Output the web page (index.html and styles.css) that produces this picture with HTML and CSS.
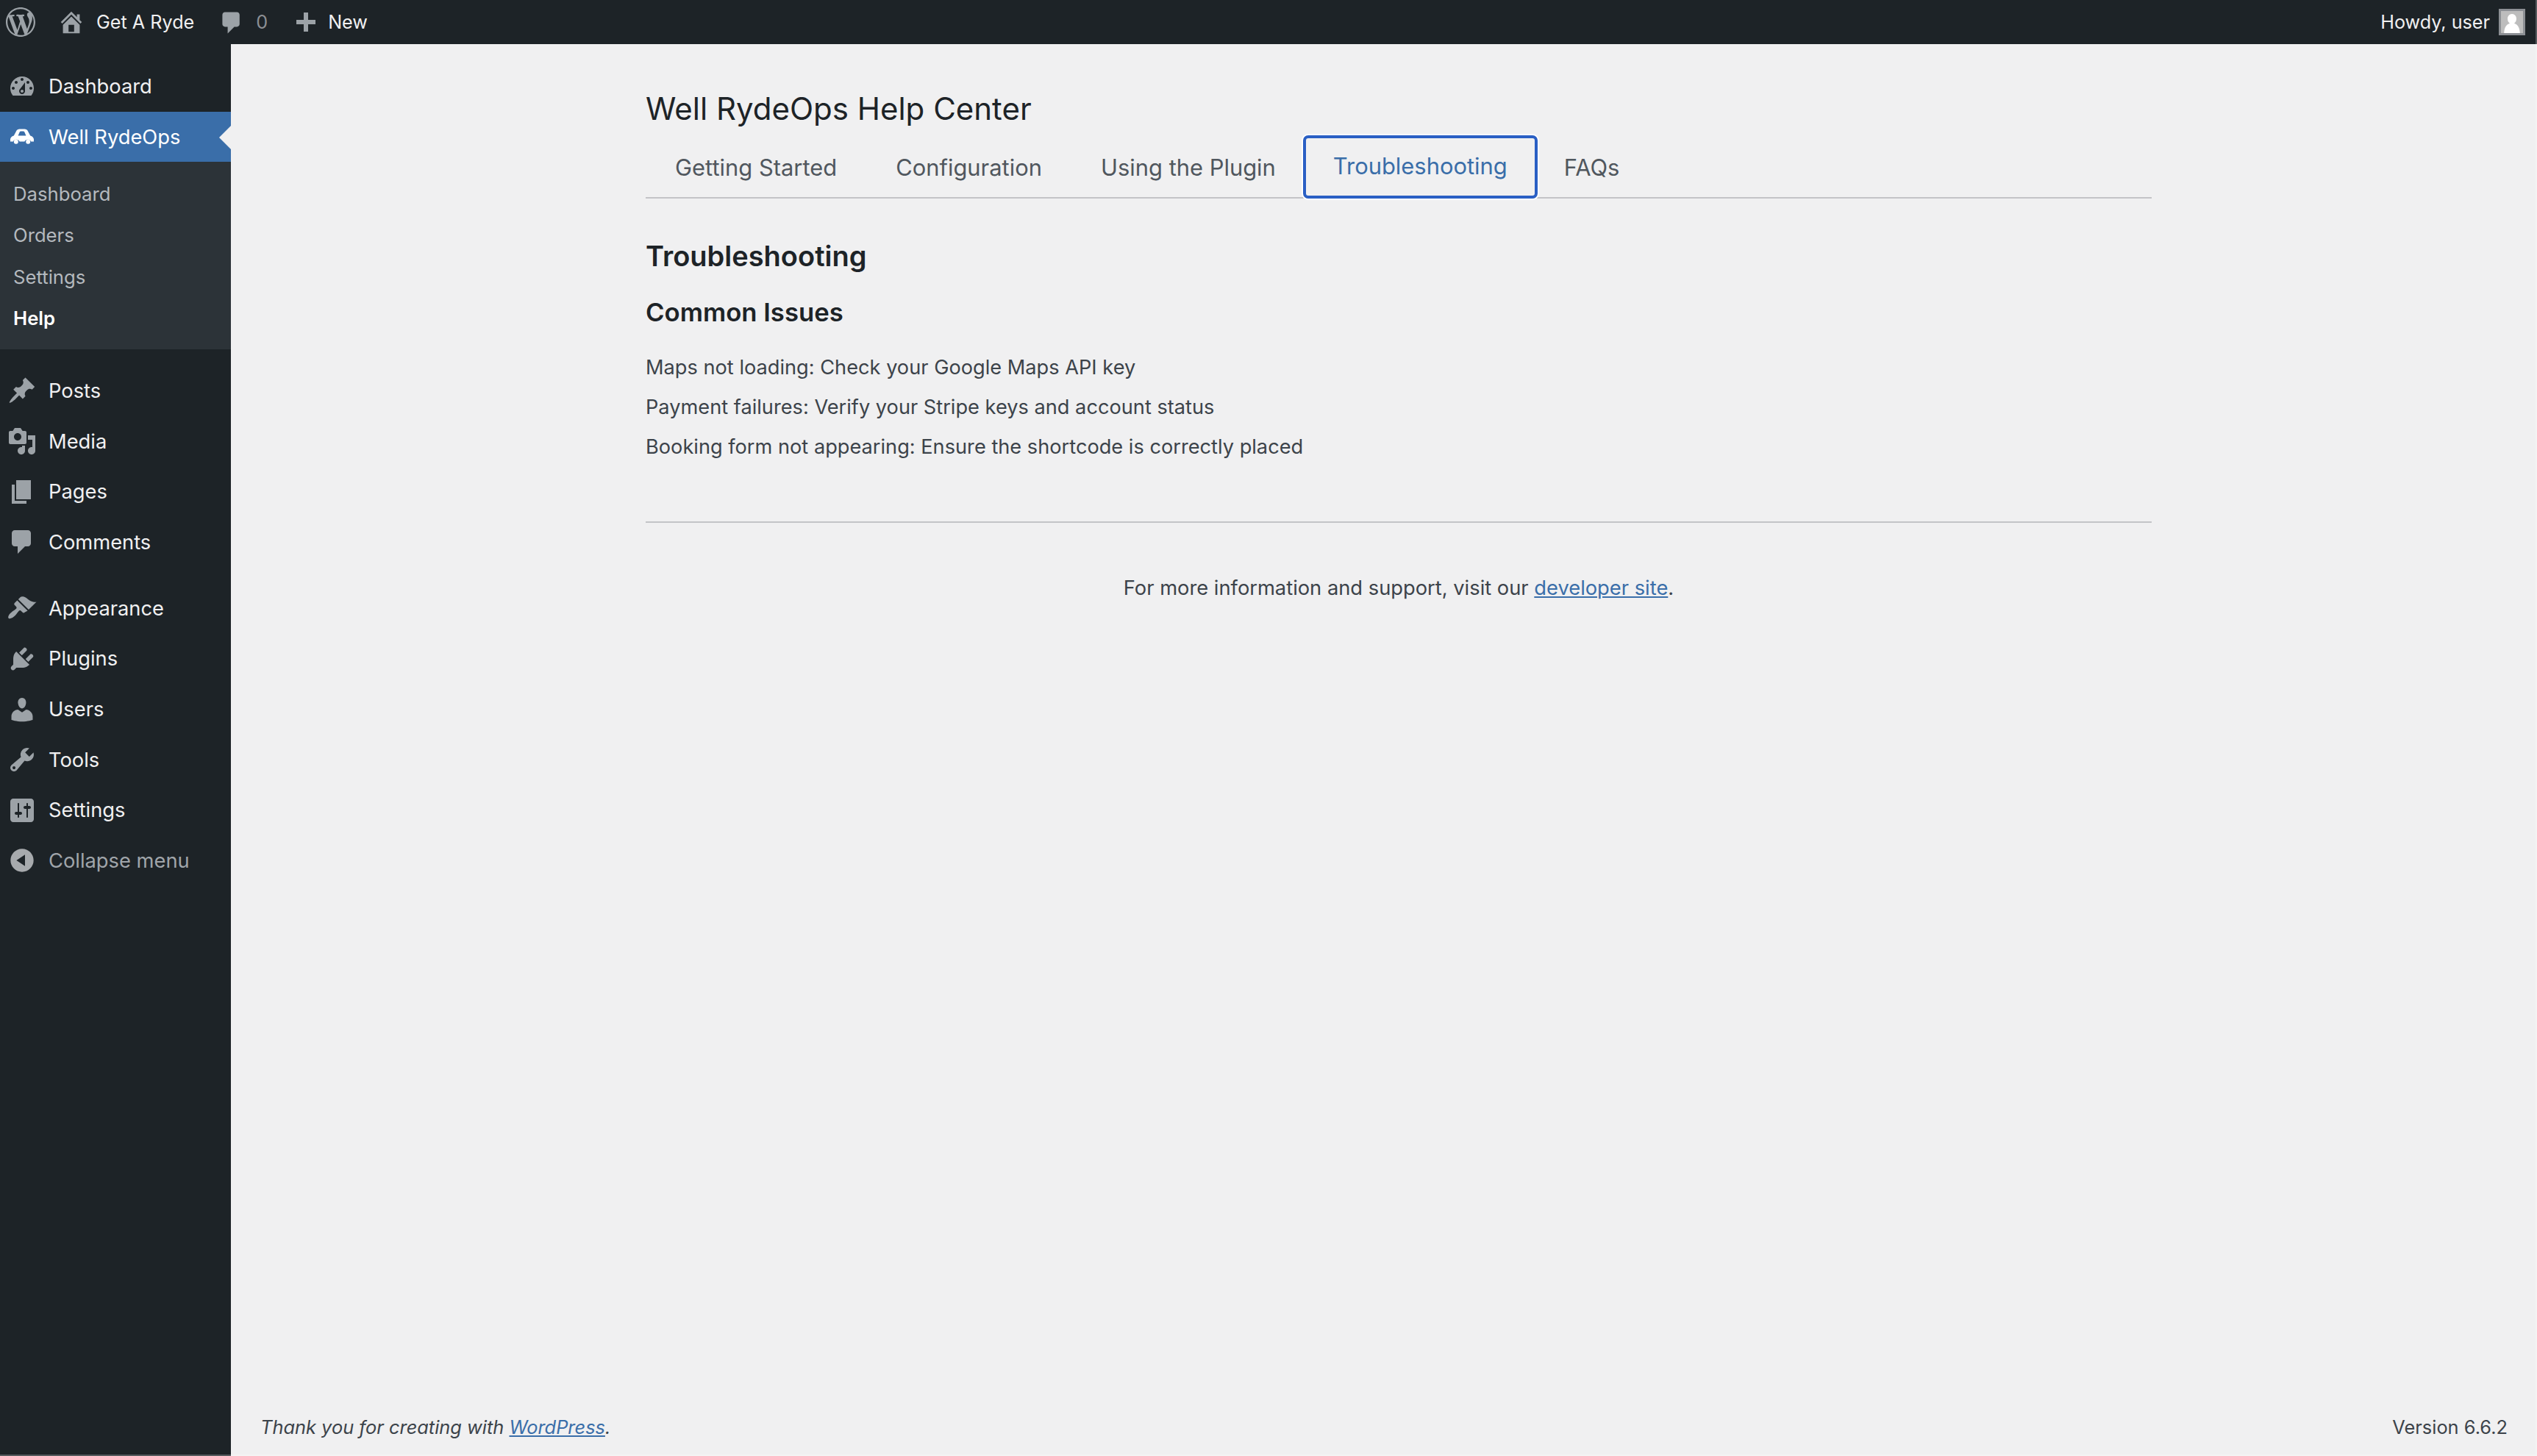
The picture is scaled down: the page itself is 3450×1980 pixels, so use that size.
FILE: index.html
```html
<!DOCTYPE html>
<html lang="en">
<head>
<meta charset="utf-8">
<title>Well RydeOps Help Center</title>
<link rel="stylesheet" href="styles.css">
</head>
<body>
<header class="adminbar">
  <svg class="bar-logo" viewBox="0 0 20 20"><path d="M20 10c0-5.51-4.49-10-10-10C4.48 0 0 4.49 0 10c0 5.52 4.48 10 10 10 5.51 0 10-4.48 10-10zM7.780 15.370L4.370 6.220c.55-.02 1.170-.08 1.170-.08.5-.06.44-1.130-.06-1.110 0 0-1.450.11-2.370.11-.18 0-.37 0-.58-.01C4.120 2.690 6.870 1.110 10 1.110c2.330 0 4.450.87 6.050 2.340-.68-.11-1.650.39-1.650 1.580 0 .74.45 1.360.9 2.100.35.61.55 1.360.55 2.460 0 1.490-1.400 5-1.400 5l-3.030-8.370c.54-.02.82-.17.82-.17.5-.05.44-1.250-.06-1.220 0 0-1.440.12-2.380.12-.87 0-2.330-.12-2.330-.12-.5-.03-.56 1.200-.06 1.220l.92.08 1.260 3.410zM17.410 10c.24-.64.74-1.870.43-4.250.7 1.290 1.050 2.710 1.050 4.250 0 3.290-1.730 6.240-4.400 7.780.97-2.590 1.940-5.200 2.920-7.780zM6.100 18.090C3.120 16.650 1.110 13.530 1.110 10c0-1.300.23-2.480.72-3.590C3.250 10.300 4.670 14.200 6.100 18.090zm4.030-6.630l2.580 6.980c-.86.29-1.760.45-2.710.45-.79 0-1.570-.11-2.290-.33.81-2.380 1.620-4.740 2.420-7.100z"/></svg>
  <svg class="bar-home" viewBox="0 0 20 20"><path fill-rule="evenodd" d="M16 8.500l1.530 1.530-1.060 1.060L10 4.620l-6.470 6.470-1.060-1.060L10 2.500l4 4v-2h2v4zm-6-2.460l6 5.990V18H4v-5.970zM12 17v-5H8v5h4z"/></svg>
  <span class="bar-site">Get A Ryde</span>
  <svg class="bar-comment" viewBox="0 0 20 20"><path d="M5 2h9c1.100 0 2 .9 2 2v7c0 1.100-.9 2-2 2h-2l-5 5v-5H5c-1.100 0-2-.9-2-2V4c0-1.100.9-2 2-2z"/></svg>
  <span class="bar-count">0</span>
  <svg class="bar-plus" viewBox="0 0 26 26"><path d="M10 0h6v10h10v6H16v10h-6V16H0v-6h10z"/></svg>
  <span class="bar-new">New</span>
  <span class="bar-howdy">Howdy, user</span>
  <svg class="bar-avatar" viewBox="0 0 36 36"><rect x="1.500" y="1.500" width="33" height="33" fill="#bdbdbd" stroke="#8c8f94" stroke-width="3"/><path fill="#fff" d="M18 7c3.800 0 6 3 6 6.500 0 2.700-1.200 5-3 6.200 4.500 1.300 7.500 5.700 7.800 13.300H7.200c.3-7.600 3.300-12 7.800-13.300-1.800-1.200-3-3.500-3-6.200C12 10 14.200 7 18 7z"/></svg>
</header>

<div class="layout">
  <nav class="sidebar">
    <ul class="menu">
      <li class="item"><svg class="ico" viewBox="0 0 20 20"><path fill-rule="evenodd" d="M3.760 16h12.480c1.100-1.370 1.760-3.110 1.760-5 0-4.420-3.580-8-8-8s-8 3.580-8 8c0 1.890.66 3.630 1.760 5zM10 4c.55 0 1 .45 1 1s-.45 1-1 1-1-.45-1-1 .45-1 1-1zM6 6c.55 0 1 .45 1 1s-.45 1-1 1-1-.45-1-1 .45-1 1-1zm8 0c.55 0 1 .45 1 1s-.45 1-1 1-1-.45-1-1 .45-1 1-1zm-5.370 5.550L12 7v6c0 1.100-.9 2-2 2s-2-.9-2-2c0-.57.24-1.080.63-1.450zM4 10c.55 0 1 .45 1 1s-.45 1-1 1-1-.45-1-1 .45-1 1-1zm12 0c.55 0 1 .45 1 1s-.45 1-1 1-1-.45-1-1 .45-1 1-1zm-5 3c0-.55-.45-1-1-1s-1 .45-1 1 .45 1 1 1 1-.45 1-1z"/></svg>Dashboard</li>
      <li class="item item-current"><svg class="ico" viewBox="0 0 20 20"><path fill-rule="evenodd" d="M2 13.300v-1.600c0-1.100 1-2.100 2.400-2.500L6 6.200c.5-1 1.300-1.450 2.300-1.450h3.400c1 0 1.800.45 2.300 1.450l1.600 3c1.400.4 2.400 1.400 2.400 2.500v1.600h-1.900a2.400 2.400 0 0 0-4.400 0H8.300a2.400 2.400 0 0 0-4.400 0H2zM7.300 9.200h5.400l-1-2.300c-.2-.4-.5-.6-.9-.6H9.200c-.4 0-.7.2-.9.6l-1 2.300z"/><circle cx="5.900" cy="13.400" r="1.500"/><circle cx="14.100" cy="13.400" r="1.500"/></svg>Well RydeOps</li>
    </ul>
    <ul class="submenu">
      <li class="subitem">Dashboard</li>
      <li class="subitem">Orders</li>
      <li class="subitem">Settings</li>
      <li class="subitem subitem-current">Help</li>
    </ul>
    <ul class="menu menu-group">
      <li class="item"><svg class="ico" viewBox="0 0 20 20"><path d="M10.440 3.020l1.820-1.820 6.360 6.350-1.830 1.820c-1.050-.68-2.480-.57-3.410.36l-.75.75c-.92.93-1.040 2.350-.35 3.410l-1.830 1.820-2.410-2.410-2.800 2.790c-.42.42-3.380 2.710-3.800 2.290s1.860-3.390 2.280-3.810l2.790-2.790L4.100 9.360l1.830-1.820c1.050.69 2.480.57 3.400-.36l.75-.75c.93-.92 1.050-2.350.36-3.410z"/></svg>Posts</li>
      <li class="item"><svg class="ico" viewBox="0 0 20 20"><path fill-rule="evenodd" d="M13 11V4c0-.55-.45-1-1-1h-1.670L9 1H5L3.670 3H2c-.55 0-1 .45-1 1v7c0 .55.45 1 1 1h10c.55 0 1-.45 1-1zM7 4.500c1.380 0 2.500 1.120 2.500 2.500S8.380 9.500 7 9.500 4.500 8.380 4.500 7 5.620 4.500 7 4.500zM14 6h5v10.500c0 1.380-1.120 2.500-2.500 2.500S14 17.880 14 16.500s1.120-2.500 2.500-2.500c.17 0 .34.02.5.05V9h-3V6zm-4 8.050V13h2v3.500c0 1.380-1.120 2.500-2.500 2.500S7 17.880 7 16.500 8.120 14 9.500 14c.17 0 .34.02.5.05z"/></svg>Media</li>
      <li class="item"><svg class="ico" viewBox="0 0 20 20"><path d="M6 15V2h10v13H6zm-1 1h8v2H3V5h2v11z"/></svg>Pages</li>
      <li class="item"><svg class="ico" viewBox="0 0 20 20"><path d="M5 2h9c1.100 0 2 .9 2 2v7c0 1.100-.9 2-2 2h-2l-5 5v-5H5c-1.100 0-2-.9-2-2V4c0-1.100.9-2 2-2z"/></svg>Comments</li>
    </ul>
    <ul class="menu menu-group">
      <li class="item"><svg class="ico" viewBox="0 0 20 20"><path d="M14.480 11.060L7.410 3.990l1.500-1.500c.5-.56 2.300-.47 3.510.32 1.210.8 1.430 1.280 2.910 2.100 1.180.64 2.450 1.260 4.450.85zm-.71.71L6.700 4.700 4.930 6.470c-.39.39-.39 1.020 0 1.410l1.060 1.060c.39.39.39 1.030 0 1.420-.6.6-1.430 1.110-2.210 1.690-.35.26-.7.53-1.010.84C1.430 13.710 0 16.060.86 16.920c.85.86 3.200-.57 4.480-1.860.31-.31.58-.66.84-1.010.58-.78 1.090-1.610 1.690-2.210.39-.39 1.030-.39 1.420 0l1.060 1.060c.39.39 1.020.39 1.410 0z"/></svg>Appearance</li>
      <li class="item"><svg class="ico" viewBox="0 0 20 20"><path d="M13.110 4.360L9.870 7.600 8 5.730l3.240-3.240c.35-.34 1.050-.2 1.560.32.52.51.66 1.210.31 1.550zm-8 1.770l.91-1.120 9.010 9.010-1.190.84c-.71.71-2.630 1.160-3.820 1.160H6.140L4.900 17.260c-.59.59-1.540.59-2.120 0-.59-.58-.59-1.530 0-2.120l1.240-1.240v-3.880c0-1.130.4-3.190 1.090-3.890zm7.260 3.970l3.240-3.240c.34-.35 1.040-.21 1.550.31.52.51.66 1.210.31 1.550l-3.240 3.250z"/></svg>Plugins</li>
      <li class="item"><svg class="ico" viewBox="0 0 20 20"><path d="M10 9.250c-2.270 0-2.730-3.440-2.730-3.440C7 4.020 7.820 2 9.970 2c2.160 0 2.980 2.020 2.710 3.810 0 0-.41 3.440-2.680 3.440zm0 2.570L12.720 10c2.390 0 4.520 2.330 4.520 4.530v2.490s-3.650 1.130-7.240 1.130c-3.650 0-7.240-1.130-7.240-1.130v-2.490c0-2.250 1.940-4.480 4.470-4.480z"/></svg>Users</li>
      <li class="item"><svg class="ico" viewBox="0 0 20 20"><path fill-rule="evenodd" d="M16.680 9.770c-1.340 1.340-3.300 1.670-4.950.99l-5.410 6.520c-.99.99-2.590.99-3.580 0s-.99-2.590 0-3.570l6.520-5.420c-.68-1.650-.35-3.610.99-4.950 1.280-1.280 3.120-1.620 4.720-1.060l-2.890 2.890 2.820 2.820 2.860-2.870c.53 1.580.18 3.390-1.080 4.650zM3.810 16.210c.4.39 1.040.39 1.430 0 .4-.4.4-1.040 0-1.430-.39-.4-1.030-.4-1.430 0-.39.39-.39 1.030 0 1.430z"/></svg>Tools</li>
      <li class="item"><svg class="ico" viewBox="0 0 20 20"><path fill-rule="evenodd" d="M18 16V4c0-1.100-.9-2-2-2H4c-1.100 0-2 .9-2 2v12c0 1.100.9 2 2 2h12c1.100 0 2-.9 2-2zM8 11h1c.55 0 1 .45 1 1s-.45 1-1 1H8v1.500c0 .28-.22.5-.5.5s-.5-.22-.5-.5V13H6c-.55 0-1-.45-1-1s.45-1 1-1h1V5.500c0-.28.22-.5.5-.5s.5.22.5.5V11zm5-2h-1c-.55 0-1-.45-1-1s.45-1 1-1h1V5.500c0-.28.22-.5.5-.5s.5.22.5.5V7h1c.55 0 1 .45 1 1s-.45 1-1 1h-1v5.500c0 .28-.22.5-.5.5s-.5-.22-.5-.5V9z"/></svg>Settings</li>
      <li class="item item-collapse"><svg class="ico" viewBox="0 0 20 20"><path fill-rule="evenodd" d="M10 2.160c4.330 0 7.840 3.510 7.840 7.840s-3.510 7.840-7.840 7.840S2.160 14.330 2.160 10 5.710 2.160 10 2.160zm2 11.720V6.120L6.180 9.970z"/></svg>Collapse menu</li>
    </ul>
  </nav>

  <div class="main">
    <main class="content">
      <h1 class="page-title">Well RydeOps Help Center</h1>
      <div class="tabs">
        <span class="tab">Getting Started</span>
        <span class="tab">Configuration</span>
        <span class="tab">Using the Plugin</span>
        <span class="tab tab-active">Troubleshooting</span>
        <span class="tab">FAQs</span>
      </div>
      <h2 class="section-title">Troubleshooting</h2>
      <h3 class="sub-title">Common Issues</h3>
      <p class="issue">Maps not loading: Check your Google Maps API key</p>
      <p class="issue">Payment failures: Verify your Stripe keys and account status</p>
      <p class="issue">Booking form not appearing: Ensure the shortcode is correctly placed</p>
      <hr class="rule">
      <p class="more">For more information and support, visit our <a class="link" href="#">developer site</a>.</p>
    </main>
    <footer class="footer">
      <span class="thanks">Thank you for creating with <a class="link" href="#">WordPress</a>.</span>
      <span class="version">Version 6.6.2</span>
    </footer>
  </div>
</div>
</body>
</html>
```
FILE: styles.css
```css
* { box-sizing: border-box; }
html, body { margin: 0; padding: 0; height: 100%; }
body {
  position: relative;
  display: flex;
  flex-direction: column;
  height: 1980px;
  overflow: hidden;
  background: #f0f0f1;
  color: #3c434a;
  font-family: Inter, "Liberation Sans", sans-serif;
  font-size: 25.4px;
}
/* Window edge of the captured screen, lying over everything */
body::after {
  content: "";
  position: absolute;
  inset: 0;
  border-right: 2px solid rgba(255, 255, 255, 0.25);
  border-bottom: 2px solid rgba(255, 255, 255, 0.25);
  pointer-events: none;
}
ul { list-style: none; margin: 0; padding: 0; }

/* Admin bar */
.adminbar {
  flex: none;
  display: flex;
  align-items: center;
  height: 60px;
  padding: 0 16px 0 8px;
  background: #1d2327;
  color: #f0f0f1;
  font-size: 25.2px;
}
.adminbar svg { flex: none; fill: #9ca2a7; }
.bar-logo { width: 40px; height: 40px; }
.bar-home { width: 38px; height: 38px; margin: 0 0 0 30px; }
.bar-site { margin-left: 15px; }
.bar-comment { width: 36px; height: 36px; margin: 2px 0 0 33px; }
.bar-count { margin-left: 15px; color: #8c8f94; }
.bar-plus { width: 26px; height: 26px; margin-left: 39px; }
.bar-new { margin-left: 17px; }
.bar-howdy { margin-left: auto; }
.bar-avatar { width: 36px; height: 36px; margin-left: 12px; }

/* Layout */
.layout { flex: 1; display: flex; min-height: 0; }

/* Sidebar */
.sidebar {
  flex: none;
  width: 314px;
  padding-top: 23px;
  background: #1d2327;
  color: #f0f0f1;
  font-size: 27.3px;
}
.item {
  position: relative;
  display: flex;
  align-items: center;
  height: 68.6px;
  padding: 1px 0 0 10px;
}
.ico { flex: none; width: 40px; height: 40px; margin-right: 16px; fill: #9ca2a7; }
.item-current { background: #3a6ea9; color: #fff; }
.item-current .ico { fill: #fff; }
.item-current::after {
  content: "";
  position: absolute;
  right: 0;
  top: 19px;
  border: 16px solid transparent;
  border-left-width: 0;
  border-right-color: #f0f0f1;
}
.item-collapse { color: #a0a5aa; }
.item-collapse .ico { fill: #a7aaad; }
.submenu {
  padding: 15px 0 15px;
  height: 255px;
  background: #2c3338;
  color: #b4b9be;
  font-size: 25.7px;
}
.subitem {
  display: flex;
  align-items: center;
  height: 56.4px;
  padding-left: 18px;
}
.subitem-current { color: #fff; font-weight: 600; }
.menu-group { margin-top: 21.5px; }

/* Main */
.main { flex: 1; display: flex; flex-direction: column; min-width: 0; padding: 0 40px; }
.content { flex: 1; width: 2088px; margin: 0 auto; padding-left: 40px; }
.page-title {
  margin: 0;
  padding-top: 55px;
  height: 123px;
  color: #1d2327;
  font-size: 42px;
  font-weight: 400;
  line-height: 66px;
}
.tabs {
  display: flex;
  height: 87px;
  border-bottom: 2px solid #c3c4c7;
}
.tab {
  display: flex;
  align-items: center;
  height: 85px;
  padding: 3px 40px 0;
  color: #50575e;
  font-size: 30.9px;
}
.tab-active {
  height: 86px;
  margin: 1px -4px 0 -3px;
  padding: 0 37px 4px;
  border: 4px solid #2a5fc4;
  border-radius: 7px;
  box-shadow: 0 0 0 2px #fff;
  color: #3a6ea9;
}
.section-title {
  margin: 53px 0 0;
  color: #1d2327;
  font-size: 38px;
  font-weight: 600;
  line-height: 50px;
}
.sub-title {
  margin: 29px 0 34px;
  color: #1d2327;
  font-size: 34.7px;
  font-weight: 600;
  line-height: 44px;
}
.issue { margin: 0 0 14px; font-size: 27.2px; line-height: 40px; }
.rule {
  height: 2px;
  margin: 81px 0 69px;
  border: 0;
  background: #c3c4c7;
}
.more { margin: 0; font-size: 27.3px; line-height: 40px; text-align: center; }
.link { color: #3a6ea9; }
.footer {
  flex: none;
  display: flex;
  justify-content: space-between;
  align-items: center;
  height: 80px;
}
.thanks { font-style: italic; }
```
